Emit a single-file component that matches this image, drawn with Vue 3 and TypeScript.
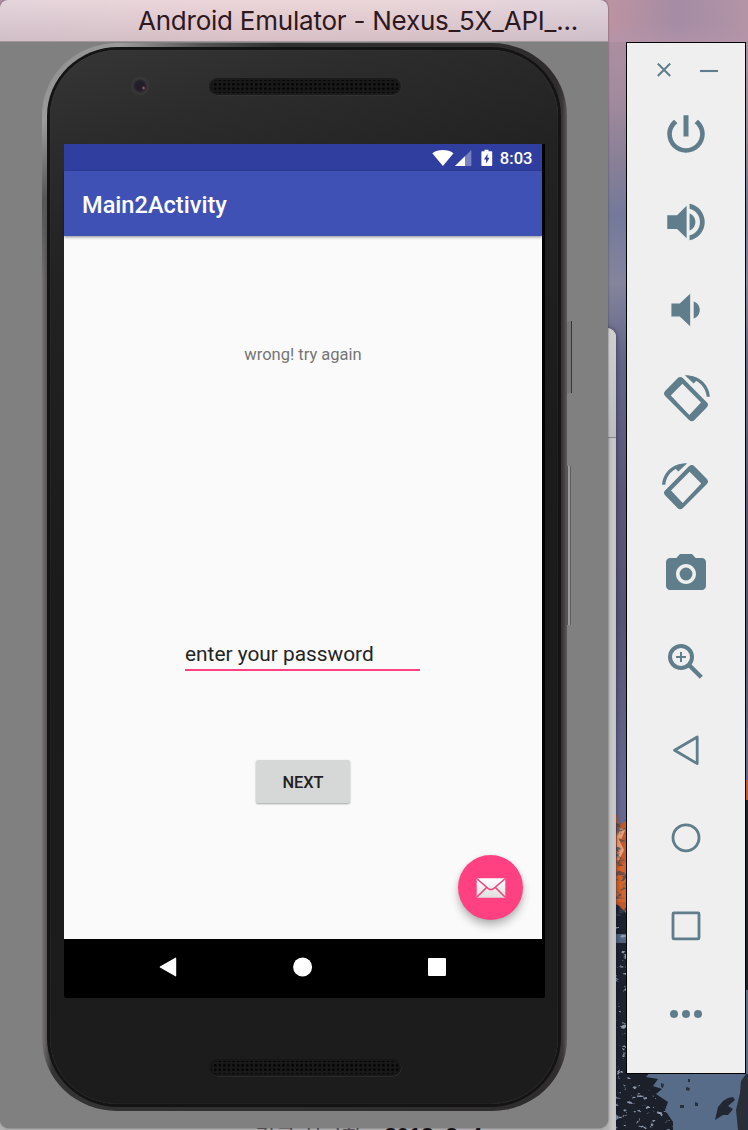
<script setup lang="ts">
interface ToolIcon {
  name: string
  size: number
  box: string
  paths?: string[]
  strokes?: { d: string; width: number }[]
}

const material = '0 0 24 24'
const cell = '0 0 48 48'

const tools: ToolIcon[] = [
  {
    name: 'Power',
    size: 50,
    box: material,
    paths: [
      'M13.2 3h-2.4v10.2h2.4V3zm4.5 2.2l-1.6 1.6C17.7 8 18.8 9.8 18.8 12c0 3.75-3.05 6.8-6.8 6.8S5.2 15.75 5.2 12c0-2.2 1.1-4 2.7-5.2L6.3 5.2C4.3 6.8 3 9.26 3 12c0 4.97 4.03 9 9 9s9-4.03 9-9c0-2.74-1.3-5.2-3.3-6.8z',
    ],
  },
  {
    name: 'Volume up',
    size: 50,
    box: material,
    paths: [
      'M3 8.7v6.6h4.7l4.6 4.5V4.2L7.7 8.7H3z',
      'M16.5 12c0-1.9-1.2-3.6-2.8-4.1v8.2c1.6-.5 2.8-2.2 2.8-4.1z',
      'M13.7 3.2v2.4c2.9.6 5 3.2 5 6.4s-2.1 5.8-5 6.4v2.4c4.2-.7 7.3-4.5 7.3-8.8s-3.1-8.1-7.3-8.8z',
    ],
  },
  {
    name: 'Volume down',
    size: 50,
    box: material,
    paths: ['M5 8.9v6.2h4l5 4.7V4.2L9 8.9H5z', 'M18.6 12c0-1.9-1.2-3.6-2.9-4.1v8.2c1.7-.5 2.9-2.2 2.9-4.1z'],
  },
  {
    name: 'Rotate left',
    size: 48,
    box: cell,
    paths: [
      'M20.8 4.1q-2.7-2.2-5.4.3L3.3 16.8q-2.7 2.8 0 5.5L27 46q2.8 2.7 5.5 0L44.7 33.6q2.7-2.8 0-5.4zM20.4 9.8L39 28.4L27.3 41L8.8 21.6z',
      'M22.8 1.3C36 1 47 9.5 47.9 22.8h-3.2C44 15 39.3 9.4 34.2 6.9L31.6 9.5z',
    ],
  },
  {
    name: 'Rotate right',
    size: 48,
    box: cell,
    paths: [
      'M27.2 4.1q2.7-2.2 5.4.3L44.7 16.8q2.7 2.8 0 5.5L21 46q-2.8 2.7-5.5 0L3.3 33.6q-2.7-2.8 0-5.4zM27.6 9.8L9 28.4L20.7 41L39.2 21.6z',
      'M25.2 1.3C12 1 1 9.5.1 22.8h3.2C4 15 8.7 9.4 13.8 6.9L16.4 9.5z',
    ],
  },
  {
    name: 'Screenshot',
    size: 48,
    box: material,
    paths: [
      'M12 8.8a3.2 3.2 0 1 0 0 6.4a3.2 3.2 0 1 0 0-6.4z',
      'M9 2L7.17 4H4c-1.1 0-2 .9-2 2v12c0 1.1.9 2 2 2h16c1.1 0 2-.9 2-2V6c0-1.1-.9-2-2-2h-3.17L15 2H9zm3 15c-2.76 0-5-2.24-5-5s2.24-5 5-5 5 2.24 5 5-2.24 5-5 5z',
    ],
  },
  {
    name: 'Zoom',
    size: 48,
    box: cell,
    strokes: [
      { d: 'M19 8a11 11 0 1 0 0 22a11 11 0 1 0 0-22z', width: 4 },
      { d: 'M14 19h10M19 14v10', width: 2 },
      { d: 'M27.5 27.5L39.3 39.3', width: 4.4 },
    ],
  },
  { name: 'Back', size: 48, box: cell, strokes: [{ d: 'M35.2 11L12.6 24.3L35.2 37.6z', width: 2.8 }] },
  { name: 'Home', size: 48, box: cell, strokes: [{ d: 'M24 10.8a13 13 0 1 0 0 26a13 13 0 1 0 0-26z', width: 2.8 }] },
  {
    name: 'Overview',
    size: 48,
    box: cell,
    strokes: [{ d: 'M12 10.9h24q1 0 1 1v24q0 1-1 1h-24q-1 0-1-1v-24q0-1 1-1z', width: 2.8 }],
  },
  {
    name: 'More',
    size: 48,
    box: cell,
    paths: [
      'M12 20a4 4 0 1 0 0 8a4 4 0 1 0 0-8z',
      'M24 20a4 4 0 1 0 0 8a4 4 0 1 0 0-8z',
      'M36 20a4 4 0 1 0 0 8a4 4 0 1 0 0-8z',
    ],
  },
]
</script>

<template>
  <main class="desktop">
    <svg class="wallpaper" width="748" height="1130" viewBox="0 0 748 1130" aria-hidden="true">
      <defs>
        <linearGradient id="sky" x1="0" y1="0" x2="0" y2="1">
          <stop offset="0" stop-color="#b290a3" />
          <stop offset=".08" stop-color="#a58b9e" />
          <stop offset=".14" stop-color="#8a8097" />
          <stop offset=".19" stop-color="#74799a" />
          <stop offset=".25" stop-color="#84849d" />
          <stop offset=".32" stop-color="#626587" />
          <stop offset=".45" stop-color="#5b5576" />
          <stop offset=".55" stop-color="#575473" />
          <stop offset=".7" stop-color="#66688f" />
        </linearGradient>
        <linearGradient id="glow" x1="0" y1="0" x2="1" y2="0">
          <stop offset="0" stop-color="#c295a1" />
          <stop offset=".5" stop-color="#9f8ba5" />
          <stop offset="1" stop-color="#b496a8" />
        </linearGradient>
        <linearGradient id="fade" x1="0" y1="0" x2="0" y2="1">
          <stop offset="0" stop-color="#b494aa" stop-opacity="0" />
          <stop offset="1" stop-color="#b494aa" />
        </linearGradient>
        <filter id="rock" x="0" y="0" width="1" height="1">
          <feTurbulence type="fractalNoise" baseFrequency=".09 .14" numOctaves="4" seed="8" />
          <feColorMatrix values="0 0 0 0 .05  0 0 0 0 .06  0 0 0 0 .09  0 9 0 0 -4.6" />
          <feComposite in2="SourceGraphic" operator="in" />
        </filter>
        <filter id="frost" x="0" y="0" width="1" height="1">
          <feTurbulence type="fractalNoise" baseFrequency=".14 .2" numOctaves="4" seed="3" />
          <feColorMatrix values="0 0 0 0 .27  0 0 0 0 .33  0 0 0 0 .43  0 8 0 0 -5.1" />
          <feComposite in2="SourceGraphic" operator="in" />
        </filter>
      </defs>
      <rect width="748" height="1130" fill="url(#sky)" />
      <rect x="608" width="140" height="42" fill="url(#glow)" opacity=".7" />
      <rect x="608" y="22" width="140" height="20" fill="url(#fade)" opacity=".7" />
      <path d="M608 812l9 3 2 10 7-4V915H608zM745 780h3v60h-3z" fill="#c35a2b" />
      <path d="M617 826l8 4-5 12 4 8-7 14z" fill="#eba27c" />
      <path d="M617 868l9 -6v40h-9z" fill="#d4662d" />
      <path d="M608 902l10 3 8 8v217H608zM745 800h3v190h-3z" fill="#1d222e" />
      <path d="M616 934h10v9h-10z" fill="#53657f" />
      <rect x="608" y="1074" width="140" height="56" fill="#566c89" />
      <path d="M745 990h3v84h-3z" fill="#566c8b" />
      <path d="M608 1070h44l-6 7 12 2-5 7 9 3-6 5 12 8-3 8 8 12v8H608z" fill="#1b202b" />
      <path d="M746 1074l-5 7-1 12-4 17 2 20h10v-56z" fill="#2a2e38" />
      <path d="M718 1107l5-6 5-3 5-1 2 3-7 6 5 3-5 6-5 0-8 5z" fill="#222733" />
      <path d="M661 1083l3 1-1 4-2-1zM686 1087l4 1-1 3-3-1zM695 1102l3 1v3h-3zM680 1105l4 0v3h-4zM688 1079h2v3h-2z" fill="#26303f" />
      <rect x="608" y="820" width="18" height="96" fill="#000" opacity=".7" filter="url(#rock)" />
      <path d="M608 925h18v205h-18zM626 1076l34 18 14 36h-48z" fill="#fff" filter="url(#frost)" />
    </svg>

    <section class="back-window">
      <div class="back-toolbar"></div>
      <p class="back-line"><span class="faint">리군 시류하.</span><b>2018. 3. 4</b></p>
    </section>

    <section class="emulator">
      <header class="titlebar">Android Emulator - Nexus_5X_API_...</header>
      <div class="stage">
        <div class="phone">
          <div class="rim">
            <div class="face">
              <div class="brow">
                <span class="lens"></span>
                <span class="speaker"></span>
              </div>
              <div class="backing">
                <div class="screen">
                  <div class="status">
                    <svg width="40" height="18" viewBox="0 0 40 18" fill="#fff">
                      <path d="M.3 4.2C6-.1 15.8-.1 21.5 4.2L10.9 17z" />
                      <path d="M39.3 1v16H23z" opacity=".35" />
                      <path d="M33 7.3V17H23z" />
                    </svg>
                    <svg class="battery" width="12" height="18" viewBox="0 0 12 18">
                      <path
                        fill="#fff"
                        fill-rule="evenodd"
                        d="M3.5.8h4v1.5h2.9q.8 0 .8.8v13.1q0 .8-.8.8H1.2q-.8 0-.8-.8V3.1q0-.8.8-.8h2.3zM6.5 4.8L3 10.4h2.1v4l3.4-5.6H6.5z"
                      />
                    </svg>
                    <span>8:03</span>
                  </div>
                  <div class="appbar">Main2Activity</div>
                  <div class="content">
                    <p class="message">wrong! try again</p>
                    <div class="field">enter your password</div>
                    <button class="next">NEXT</button>
                    <button class="fab" aria-label="Mail">
                      <svg width="30" height="22" viewBox="0 0 30 22">
                        <defs>
                          <linearGradient id="mail" x1="0" y1="0" x2="0" y2="1">
                            <stop offset="0" stop-color="#fff" />
                            <stop offset="1" stop-color="#dedede" />
                          </linearGradient>
                        </defs>
                        <rect x=".7" y="1.2" width="28.6" height="19.6" rx="1.2" fill="url(#mail)" />
                        <path
                          d="M1 1.8L12.3 11.6q2.7 2 5.4 0L29 1.8M1 20L10.7 10.4M29 20L19.3 10.4"
                          fill="none"
                          stroke="#e8487d"
                          stroke-width="1.5"
                        />
                      </svg>
                    </button>
                  </div>
                </div>
                <nav class="navbar">
                  <svg width="18" height="20" viewBox="0 0 18 20"><path d="M16.6 1.2v17.6L1.3 10z" fill="#fff" stroke="#fff" stroke-width="1.2" stroke-linejoin="round" /></svg>
                  <svg width="20" height="20" viewBox="0 0 20 20"><circle cx="9.6" cy="10" r="9.5" fill="#fff" /></svg>
                  <svg width="18" height="20" viewBox="0 0 18 20"><rect y="1" width="18" height="18" rx="1" fill="#fff" /></svg>
                </nav>
              </div>
              <div class="chin"><span class="speaker low"></span></div>
            </div>
          </div>
          <span class="key power-key"></span>
          <span class="key volume-key"></span>
        </div>
      </div>
    </section>

    <aside class="toolbar">
      <div class="window-keys">
        <svg width="14" height="14" viewBox="0 0 14 14"><path d="M.8.6L13.2 13M13.2.6L.8 13" /></svg>
        <svg width="18" height="14" viewBox="0 0 18 14"><path d="M0 8h18" /></svg>
      </div>
      <div v-for="tool in tools" :key="tool.name" class="tool">
        <svg :width="tool.size" :height="tool.size" :viewBox="tool.box">
          <path v-for="d in tool.paths" :key="d" :d="d" fill="#607d8b" fill-rule="evenodd" />
          <path
            v-for="s in tool.strokes"
            :key="s.d"
            :d="s.d"
            fill="none"
            stroke="#607d8b"
            stroke-linejoin="round"
            :stroke-width="s.width"
          />
        </svg>
      </div>
    </aside>
  </main>
</template>

<style>
body {
  margin: 0;
}
</style>

<style scoped>
* {
  box-sizing: border-box;
}
.desktop {
  position: relative;
  width: 748px;
  height: 1130px;
  overflow: hidden;
  font-family: Roboto, 'Noto Sans CJK KR', sans-serif;
}
.wallpaper {
  display: block;
}
.back-window {
  position: absolute;
  left: 0;
  top: 328px;
  width: 616px;
  height: 830px;
  display: flex;
  flex-direction: column;
  justify-content: space-between;
  background: linear-gradient(to right, #b0b0b0 608px, #bcbcbc 610px, #c8c8c8 613px, #c4c4c4);
  border-radius: 0 9px 0 0;
  box-shadow: 0 0 5px rgba(10, 10, 35, 0.55);
}
.back-toolbar {
  height: 110px;
  border-radius: 0 9px 0 0;
  background: linear-gradient(#cfcfcf, #bdbdbd);
  border-bottom: 1px solid #858585;
}
.back-line {
  display: flex;
  gap: 16px;
  margin: 0 0 8px 255px;
  height: 26px;
  font: 22px/26px 'Liberation Sans', 'Noto Sans CJK KR', sans-serif;
  color: #111;
  white-space: nowrap;
}
.back-line b {
  margin-top: -1px;
}
.faint {
  color: #555;
}
.emulator {
  position: absolute;
  left: 0;
  top: 0;
  width: 608px;
  height: 1128px;
  display: flex;
  flex-direction: column;
  border-radius: 8px 8px 9px 9px;
  background: #808080;
  overflow: hidden;
  box-shadow: 0 0 2px rgba(50, 40, 50, 0.75);
}
.titlebar {
  flex: 0 0 42px;
  padding-left: 138px;
  border-bottom: 1px solid #a2989c;
  background: linear-gradient(rgba(255, 255, 255, 0.1), rgba(120, 100, 115, 0.16)),
    linear-gradient(to right, #e2d0d7, #ead1d5 40%, #e8d1d5 65%, #decfd8);
  color: #2e1820;
  font: 26px/41px Inter, sans-serif;
  letter-spacing: -0.23px;
  white-space: nowrap;
}
.stage {
  flex: 1;
  padding: 1px 0 0 42px;
}
.phone {
  position: relative;
  width: 525px;
  height: 1068px;
  padding: 4px 6px 4px 5px;
  border-radius: 75px / 72px;
  background: linear-gradient(135deg, #888 0, #9c9c9c 5%, #555 10%, rgba(70, 66, 66, 0) 15%),
    linear-gradient(to right, #767474 0, #5c5959 4px, #333 10px, #2e2c2d 515px, #3c383a 521px, #575455 524px);
}
.rim {
  height: 100%;
  padding: 3px;
  border-radius: 71px / 69px;
  background: #141414;
}
.face {
  height: 100%;
  padding: 0 0 0 14px;
  border-radius: 68px / 66px;
  background: linear-gradient(165deg, #363637 0, #2c2c2c 8%, #222 19%, #1b1b1b 45%, #1c1c1d 100%);
  box-shadow: inset 0 0 1px #555;
}
.brow {
  display: flex;
  align-items: flex-start;
  height: 94px;
  padding: 26px 0 0 66px;
}
.lens {
  width: 20px;
  height: 20px;
  border-radius: 50%;
  background: radial-gradient(circle at 13.5px 12px, #b06f70 0, transparent 2px),
    radial-gradient(circle at 10px 10px, #211d29 4px, #2b2830 6px, #363637 7px, #353536 9px, #303030 10px);
}
.speaker {
  width: 192px;
  height: 17px;
  margin: 2px 0 0 59px;
  border-radius: 9px;
  background: radial-gradient(circle, #050505 1.1px, #191919 1.6px) 2px 2px / 4.55px 4.5px;
  border: 2px solid #1b1b1b;
  box-shadow: 0.5px 0.5px 0 #3a3a3a;
}
.backing {
  width: 481px;
  height: 854px;
  display: flex;
  flex-direction: column;
  background: #000;
  border-radius: 0 0 2px 2px;
}
.screen {
  width: 478px;
  height: 795px;
  display: flex;
  flex-direction: column;
  background: #fafafa;
}
.status {
  flex: 0 0 27px;
  display: flex;
  align-items: center;
  justify-content: flex-end;
  padding: 1px 9.5px 0 0;
  background: #303f9f;
  color: #fff;
  font-size: 16.6px;
  font-weight: 500;
}
.battery {
  margin: 0 7px 0 9px;
}
.appbar {
  position: relative;
  flex: none;
  height: 65px;
  padding: 1px 0 0 18px;
  background: #3f51b5;
  box-shadow: 0 1px 3px rgba(0, 0, 0, 0.45);
  color: #fff;
  font-size: 23.6px;
  font-weight: 500;
  line-height: 66px;
}
.content {
  flex: 1;
  display: flex;
  flex-direction: column;
  align-items: center;
}
.message {
  margin: 109px 0 0;
  height: 20px;
  font-size: 16.5px;
  line-height: 20px;
  color: #757575;
}
.field {
  width: 235px;
  height: 33px;
  margin: 273px 1px 0 0;
  border-bottom: 2px solid #ff4081;
  font-size: 20.85px;
  line-height: 32px;
  color: #242424;
}
.next {
  width: 94px;
  height: 43px;
  margin-top: 89px;
  border: 0;
  border-radius: 2px;
  background: #d6d7d7;
  box-shadow: 0 1px 2px rgba(0, 0, 0, 0.35);
  color: #212121;
  font: 500 16.4px/43px Roboto, sans-serif;
}
.fab {
  align-self: flex-end;
  display: flex;
  align-items: center;
  justify-content: center;
  width: 65px;
  height: 65px;
  margin: 52px 19px 0 0;
  padding: 0;
  border: 0;
  border-radius: 50%;
  background: #ff4081;
  box-shadow: 0 6px 9px rgba(0, 0, 0, 0.24), 0 1px 4px rgba(0, 0, 0, 0.1);
}
.navbar {
  flex: 1;
  display: flex;
  align-items: center;
  justify-content: space-between;
  padding: 0 99px 3px 95px;
}
.chin {
  display: flex;
  padding: 59px 0 0 86px;
}
.low {
  border-color: #171717;
}
.key {
  position: absolute;
  left: 525px;
  background: #777;
}
.power-key {
  top: 278px;
  width: 5px;
  height: 72px;
  border-right: 1px solid #393637;
}
.volume-key {
  top: 423px;
  width: 4px;
  height: 159px;
  border-left: 1px solid #555;
  border-right: 1px solid #5e5e5e;
  background: #9a9a9a;
}
.toolbar {
  position: absolute;
  left: 626px;
  top: 42px;
  width: 120px;
  height: 1032px;
  display: flex;
  flex-direction: column;
  border: 1px solid #000;
  background: #efefef;
}
.window-keys {
  display: flex;
  justify-content: space-between;
  height: 47px;
  padding: 20px 27px 0 30px;
}
.window-keys path {
  fill: none;
  stroke: #607d8b;
  stroke-width: 2.1;
}
.tool {
  display: flex;
  flex: 0 0 88px;
  align-items: center;
  justify-content: center;
}
</style>
